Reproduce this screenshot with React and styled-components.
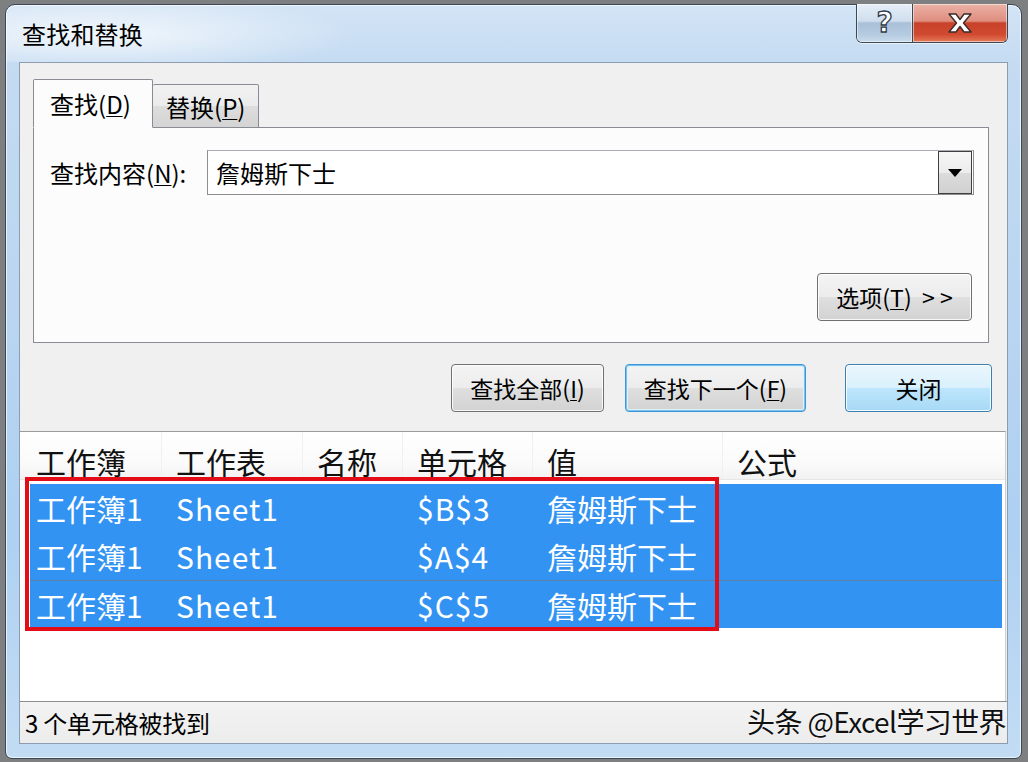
import React from "react";
import styled, { createGlobalStyle } from "styled-components";

const Global = createGlobalStyle`
  html, body { margin: 0; padding: 0; }
  body {
    width: 1028px; height: 762px; overflow: hidden;
    background: #7e7f80;
    font-family: "Noto Sans CJK SC", "Noto Sans", sans-serif;
  }
  u { text-decoration-thickness: 1px; text-underline-offset: 2px; }
`;

const Window = styled.div`
  box-sizing: border-box;
  margin: 4px 6px 0 5px;
  width: 1017px;
  height: 755px;
  border: 1px solid #3b4756;
  border-radius: 10px 10px 7px 7px;
  background: linear-gradient(180deg, #d3e4f5 0%, #c4dbf2 8%, #b9d5f1 40%, #aed0f1 70%, #c2dcf4 100%);
  box-shadow: inset 0 0 0 1px rgba(255,255,255,0.7);
  display: flex;
  flex-direction: column;
`;

const TitleBar = styled.div`
  height: 57px;
  display: flex;
  align-items: flex-start;
  background: radial-gradient(ellipse 260px 40px at 90px 30px, rgba(255,255,255,0.75), rgba(255,255,255,0) 100%);
  border-radius: 9px 9px 0 0;
`;

const Title = styled.div`
  flex: 1;
  align-self: center;
  padding-left: 16px;
  font-size: 24px;
  color: #000;
  letter-spacing: 0.2px;
`;

const CaptionGroup = styled.div`
  display: flex;
  margin-right: 13px;
  margin-top: -1px;
  border: 1px solid #3d4856;
  border-top: none;
  border-radius: 0 0 6px 6px;
  overflow: hidden;
  box-shadow: 0 1px 0 rgba(255,255,255,0.6);
`;

const CaptionButton = styled.div`
  width: ${p => p.$w}px;
  height: 38px;
  display: flex;
  align-items: center;
  justify-content: center;
  background: ${p => p.$close
    ? "linear-gradient(180deg, #eab2a6 0%, #df8e7e 45%, #c8412a 50%, #d04a30 80%, #e57a5a 100%)"
    : "linear-gradient(180deg, #e4eef8 0%, #cfdeee 45%, #a9c0d8 50%, #b5cbe0 80%, #cadbed 100%)"};
  border-left: ${p => p.$close ? "1px solid #3d4856" : "none"};
  box-shadow: inset 0 0 0 1px rgba(255,255,255,0.5);
`;

const HelpGlyph = styled.span`
  font-family: "DejaVu Sans", sans-serif;
  font-weight: bold;
  font-size: 28px;
  color: #fff;
  line-height: 1;
  -webkit-text-stroke: 1.3px #2f3b48;
`;

const Client = styled.div`
  flex: 1;
  margin: 0 13px 14px 13px;
  background: #f0f0f0;
  border: 1px solid #8c9db2;
  display: flex;
  flex-direction: column;
`;

const TabStrip = styled.div`
  display: flex;
  align-items: flex-end;
  margin: 16px 0 0 13px;
  height: 49px;
  position: relative;
  z-index: 1;
  margin-bottom: -1px;
`;

const Tab = styled.div`
  box-sizing: border-box;
  width: ${p => p.$w}px;
  height: ${p => p.$active ? 49 : 44}px;
  padding-left: ${p => p.$active ? 16 : 13}px;
  display: flex;
  align-items: center;
  font-size: 24px;
  color: #000;
  border: 1px solid #898c95;
  border-bottom: ${p => p.$active ? "1px solid #fcfcfc" : "1px solid #898c95"};
  border-left: ${p => p.$active ? "1px solid #898c95" : "none"};
  border-radius: 2px 2px 0 0;
  background: ${p => p.$active ? "#fcfcfc" : "linear-gradient(180deg, #f2f2f2 0%, #ebebeb 50%, #dddddd 51%, #d4d4d4 100%)"};
`;

const TabPanel = styled.div`
  box-sizing: border-box;
  margin: 0 18px 0 13px;
  height: 216px;
  border: 1px solid #898c95;
  background: #fcfcfc;
  padding: 22px 14px 21px 16px;
  display: flex;
  flex-direction: column;
  justify-content: space-between;
`;

const FieldRow = styled.div`
  display: flex;
  align-items: center;
`;

const Label = styled.div`
  width: 157px;
  font-size: 24px;
  color: #000;
`;

const Combo = styled.div`
  flex: 1;
  box-sizing: border-box;
  height: 45px;
  border: 1px solid #8e8f8f;
  border-top-color: #abadb3;
  background: #fff;
  display: flex;
  align-items: center;
  padding-left: 8px;
  font-size: 24px;
  color: #000;
`;

const ComboText = styled.div`
  flex: 1;
`;

const DropButton = styled.div`
  box-sizing: border-box;
  width: 34px;
  height: 43px;
  margin-right: 1px;
  border: 1px solid #3f3f3f;
  background: linear-gradient(180deg, #f6f6f6 0%, #ececec 50%, #dcdcdc 51%, #d0d0d0 100%);
  display: flex;
  align-items: center;
  justify-content: center;
`;

const OptionsRow = styled.div`
  display: flex;
  justify-content: flex-end;
  padding-right: 2px;
`;

const Button = styled.div`
  box-sizing: border-box;
  width: ${p => p.$w}px;
  height: 48px;
  border: 1px solid ${p => p.$variant === "focus" ? "#3c95d6" : p.$variant === "hover" ? "#3c7fb1" : "#707070"};
  border-radius: 4px;
  background: ${p => p.$variant === "hover"
    ? "linear-gradient(180deg, #eaf6fd 0%, #d9f0fc 50%, #bee6fd 51%, #a7d9f5 100%)"
    : "linear-gradient(180deg, #f4f4f4 0%, #ececec 50%, #dfdfdf 51%, #d2d2d2 100%)"};
  box-shadow: ${p => p.$variant === "focus"
    ? "inset 0 0 0 1px #7ac3ee, inset 0 0 0 2px #dff2fc"
    : "inset 0 0 0 1px rgba(255,255,255,0.85)"};
  display: flex;
  align-items: center;
  justify-content: center;
  font-size: 23px;
  color: #000;
`;

const ButtonRow = styled.div`
  display: flex;
  justify-content: flex-end;
  margin: 21px 15px 0 0;
`;

const Spacer = styled.div`
  width: ${p => p.$w}px;
`;

const List = styled.div`
  position: relative;
  margin: 19px 1px 0 0;
  flex: 1;
  background: #fff;
  border-top: 1px solid #9b9b9b;
  border-right: 1px solid #d0d0d0;
  display: flex;
  flex-direction: column;
`;

const HeaderRow = styled.div`
  display: grid;
  grid-template-columns: 140px 141px 100px 130px 190px 1fr;
  height: 47px;
  padding-left: 16px;
  background: linear-gradient(180deg, #ffffff 0%, #fafafa 70%, #f2f2f2 100%);
  border-bottom: 1px solid #e6e6e6;
  margin-bottom: 4px;
`;

const HeaderCell = styled.div`
  font-size: 30px;
  color: #111;
  line-height: 1;
  position: relative;
  display: flex;
  align-items: center;
  padding-top: 10px;
  &::after {
    content: "";
    position: absolute;
    right: 14px;
    top: 0;
    bottom: 0;
    width: 1px;
    background: ${p => p.$divider ? "#f0f0f0" : "transparent"};
  }
`;

const Rows = styled.div`
  margin: 0 3px 0 10px;
  background: #3393f3;
`;

const Row = styled.div`
  display: grid;
  grid-template-columns: 140px 141px 100px 130px 190px 1fr;
  height: ${p => p.$sep ? 47 : 48}px;
  align-items: center;
  padding-left: 6px;
  border-top: ${p => p.$sep ? "1px solid #5d7fa5" : "none"};
  color: #fff;
  font-size: 30px;
`;

const Cell = styled.div`
  white-space: nowrap;
  line-height: 1;
  letter-spacing: ${p => p.$latin ? 1 : 0}px;
`;

const Highlight = styled.div`
  position: absolute;
  left: 5px;
  top: 45px;
  width: 694px;
  height: 154px;
  box-sizing: border-box;
  border: 4px solid #e30d17;
  pointer-events: none;
`;

const StatusBar = styled.div`
  height: 41px;
  border-top: 1px solid #8e8e8e;
  background: linear-gradient(180deg, #f3f3f3 0%, #ececec 100%);
  display: flex;
  align-items: center;
  justify-content: space-between;
  padding: 0 1px 0 5px;
`;

const StatusText = styled.div`
  font-size: 24px;
  color: #000;
  letter-spacing: -0.2px;
`;

const Watermark = styled.div`
  font-family: "Noto Sans CJK SC", "Liberation Sans", sans-serif;
  font-size: 28px;
  color: #111;
  letter-spacing: -0.6px;
  text-shadow: 0 0 2px #fff;
  margin-top: -4px;
`;

const headers = ["工作簿", "工作表", "名称", "单元格", "值", "公式"];
const rows = [
  ["工作簿1", "Sheet1", "", "$B$3", "詹姆斯下士", ""],
  ["工作簿1", "Sheet1", "", "$A$4", "詹姆斯下士", ""],
  ["工作簿1", "Sheet1", "", "$C$5", "詹姆斯下士", ""],
];

export default function App() {
  return (
    <>
      <Global />
      <Window>
        <TitleBar>
          <Title>查找和替换</Title>
          <CaptionGroup>
            <CaptionButton $w={55}><HelpGlyph>?</HelpGlyph></CaptionButton>
            <CaptionButton $w={94} $close>
              <svg width="34" height="22" viewBox="0 0 34 22">
                <path d="M6 2 L13 2 L17 7.5 L21 2 L28 2 L20.5 11 L28 20 L21 20 L17 14.5 L13 20 L6 20 L13.5 11 Z"
                  fill="#fff" stroke="#3a2a28" strokeWidth="1.4" strokeLinejoin="round" />
              </svg>
            </CaptionButton>
          </CaptionGroup>
        </TitleBar>
        <Client>
          <TabStrip>
            <Tab $active $w={120}>查找(<u>D</u>)</Tab>
            <Tab $w={106}>替换(<u>P</u>)</Tab>
          </TabStrip>
          <TabPanel>
            <FieldRow>
              <Label>查找内容(<u>N</u>):</Label>
              <Combo>
                <ComboText>詹姆斯下士</ComboText>
                <DropButton>
                  <svg width="14" height="8" viewBox="0 0 14 8"><path d="M0 0 H14 L7 8 Z" fill="#000" /></svg>
                </DropButton>
              </Combo>
            </FieldRow>
            <OptionsRow>
              <Button $w={155}>选项(<u>T</u>)&nbsp;&nbsp;&gt; &gt;</Button>
            </OptionsRow>
          </TabPanel>
          <ButtonRow>
            <Button $w={153}>查找全部(<u>I</u>)</Button>
            <Spacer $w={21} />
            <Button $w={181} $variant="focus">查找下一个(<u>F</u>)</Button>
            <Spacer $w={39} />
            <Button $w={147} $variant="hover">关闭</Button>
          </ButtonRow>
          <List>
            <HeaderRow>
              {headers.map((h, i) => (
                <HeaderCell key={h} $divider={i < 5}>{h}</HeaderCell>
              ))}
            </HeaderRow>
            <Rows>
              {rows.map((r, i) => (
                <Row key={i} $sep={i === 2}>
                  {r.map((c, j) => <Cell key={j} $latin={j === 1 || j === 3}>{c}</Cell>)}
                </Row>
              ))}
            </Rows>
            <Highlight />
          </List>
          <StatusBar>
            <StatusText>3 个单元格被找到</StatusText>
            <Watermark>头条 @Excel学习世界</Watermark>
          </StatusBar>
        </Client>
      </Window>
    </>
  );
}
